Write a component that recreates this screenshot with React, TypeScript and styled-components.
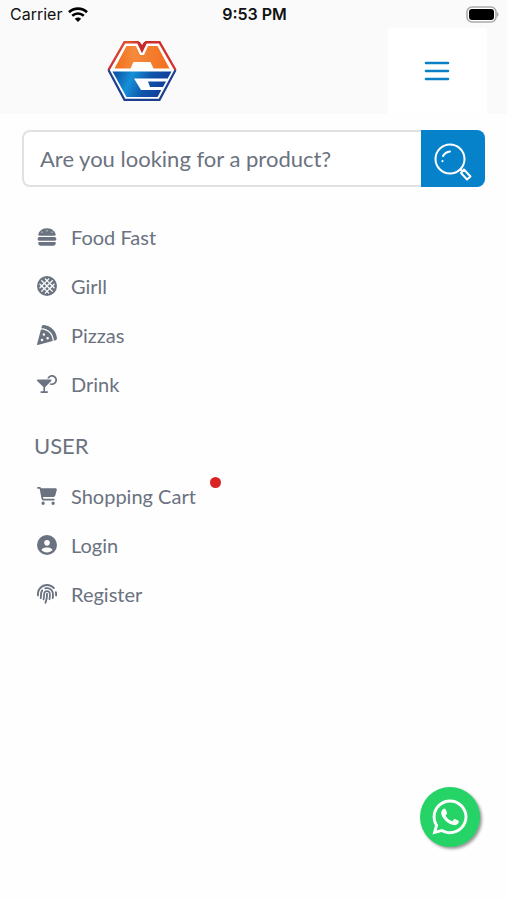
import React from 'react';
import styled, { createGlobalStyle } from 'styled-components';
import {
  FaBurger,
  FaStroopwafel,
  FaPizzaSlice,
  FaMartiniGlassCitrus,
  FaCartShopping,
  FaCircleUser,
  FaFingerprint,
  FaWhatsapp,
} from 'react-icons/fa6';

const GlobalStyle = createGlobalStyle`
  *, *::before, *::after { box-sizing: border-box; }
  body {
    margin: 0;
    background: #fefefe;
    color: #6b7280;
    font-family: Lato, 'Open Sans', sans-serif;
  }
  button, input { font: inherit; }
`;

const Page = styled.div`
  min-height: 100vh;
`;

const StatusBar = styled.div`
  display: grid;
  grid-template-columns: 1fr auto 1fr;
  align-items: center;
  height: 28px;
  padding: 0 8px 0 10px;
  background: #fafafa;
  color: #111;
  font: 400 16px/28px Inter, sans-serif;
`;

const Carrier = styled.div`
  display: flex;
  align-items: center;
  gap: 6px;
`;

const Clock = styled.time`
  font-weight: 600;
`;

const BatteryIcon = styled.svg`
  justify-self: end;
`;

const Header = styled.header`
  display: flex;
  align-items: stretch;
  justify-content: space-between;
  height: 86px;
  padding: 0 20px 0 107px;
  background: #fafafa;
`;

const LogoLink = styled.a`
  display: flex;
  align-items: center;
`;

const MenuButton = styled.button`
  display: flex;
  align-items: center;
  justify-content: center;
  width: 99px;
  padding: 0 2px 0 0;
  border: 0;
  background: #fff;
  color: #0c80c4;
  cursor: pointer;
`;

const SearchForm = styled.form`
  display: flex;
  height: 57px;
  margin: 16px 22px 0;
`;

const SearchInput = styled.input`
  flex: 1;
  min-width: 0;
  padding: 0 16px;
  border: 2px solid #dfe1e3;
  border-right: 0;
  border-radius: 8px 0 0 8px;
  outline: 0;
  background: #fff;
  color: #6b7280;
  font-size: 22px;
  &::placeholder { color: #6b7280; opacity: 1; }
`;

const SearchButton = styled.button`
  display: flex;
  align-items: center;
  justify-content: center;
  width: 64px;
  padding: 6px 0 0;
  border: 0;
  border-radius: 0 8px 8px 0;
  background: #0582ca;
  color: #fff;
  cursor: pointer;
`;

const Nav = styled.nav`
  padding: 25px 34px 0;
`;

const Heading = styled.h2`
  margin: 22px 0 9px;
  color: #6b7280;
  font-size: 22px;
  font-weight: 400;
  line-height: 32px;
`;

const MenuList = styled.ul`
  margin: 0;
  padding: 0;
  list-style: none;
`;

const MenuItem = styled.li`
  display: flex;
  height: 49px;
`;

const MenuLink = styled.a`
  position: relative;
  display: flex;
  align-items: center;
  gap: 14px;
  padding-left: 3px;
  color: #6b7280;
  font-size: 20px;
  text-decoration: none;
  svg { width: 20px; height: 20px; }
`;

const Dot = styled.span`
  position: absolute;
  top: 6px;
  right: -25px;
  width: 11px;
  height: 11px;
  border-radius: 50%;
  background: #dc2323;
`;

const ChatLink = styled.a`
  position: fixed;
  right: 27px;
  bottom: 53px;
  display: flex;
  align-items: center;
  justify-content: center;
  width: 60px;
  height: 60px;
  border-radius: 50%;
  background: #25d366;
  color: #fff;
  box-shadow: 2px 2px 3px #999;
`;

const Logo = () => (
  <svg width="70" height="60" viewBox="0 0 70 60" aria-hidden="true">
    <defs>
      <linearGradient id="rim" x1="0" y1="0" x2="1" y2="0">
        <stop offset="0" stopColor="#c92f33" />
        <stop offset="0.3" stopColor="#e0502f" />
        <stop offset="0.5" stopColor="#c62a2c" />
        <stop offset="1" stopColor="#d8322c" />
      </linearGradient>
      <linearGradient id="sun" x1="0" y1="0" x2="1" y2="0">
        <stop offset="0" stopColor="#ee6f1c" />
        <stop offset="0.35" stopColor="#f58a3c" />
        <stop offset="1" stopColor="#f26f1e" />
      </linearGradient>
      <linearGradient id="sea" x1="0" y1="0" x2="1" y2="0.2">
        <stop offset="0" stopColor="#0b4a9c" />
        <stop offset="0.35" stopColor="#168fd8" />
        <stop offset="0.65" stopColor="#0f55aa" />
        <stop offset="1" stopColor="#123c98" />
      </linearGradient>
    </defs>
    <path d="M17 0H53L70 29 53 60H17L0 29Z" fill="#fff" />
    <path d="M1.500 29 17.500 1.200H31L35 9.500 39 1.200H52.500L68.500 29" fill="none" stroke="url(#rim)" strokeWidth="2.4" />
    <path d="M31 1 35 10 39 1 37 1 35 4 33 1Z" fill="#c62a2c" />
    <path d="M1.500 29 17.500 58.800H52.500L68.500 29" fill="none" stroke="#1c3f8e" strokeWidth="2.2" />
    <path d="M19.500 5H29L33 14H37L41 5H50.500L62.500 27.500H46.500L43.500 21H26.500L23.500 27.500H7.500Z" fill="url(#sun)" />
    <path d="M5.500 30.500H64.500L50.500 56H19.500Z" fill="url(#sea)" />
    <path d="M27 37.500H61L59.500 40.500H41L43 46H56.500L55 49H34Z" fill="#fff" />
  </svg>
);

type Entry = { label: string; Icon: React.ComponentType; marked?: boolean };

const links: Entry[] = [
  { label: 'Food Fast', Icon: FaBurger },
  { label: 'Girll', Icon: FaStroopwafel },
  { label: 'Pizzas', Icon: FaPizzaSlice },
  { label: 'Drink', Icon: FaMartiniGlassCitrus },
];

const userLinks: Entry[] = [
  { label: 'Shopping Cart', Icon: FaCartShopping, marked: true },
  { label: 'Login', Icon: FaCircleUser },
  { label: 'Register', Icon: FaFingerprint },
];

const Menu = ({ entries }: { entries: Entry[] }) => (
  <MenuList>
    {entries.map(({ label, Icon, marked }) => (
      <MenuItem key={label}>
        <MenuLink href="#">
          <Icon />
          {label}
          {marked && <Dot />}
        </MenuLink>
      </MenuItem>
    ))}
  </MenuList>
);

export default function App() {
  return (
    <Page>
      <GlobalStyle />
      <StatusBar>
        <Carrier>
          Carrier
          <svg width="20" height="15" viewBox="0 0 20 15" fill="none" stroke="#000" strokeWidth="2.6" aria-hidden="true">
            <path d="M1 5.2C6 .4 14 .4 19 5.2M4.2 8.8C7.6 5.8 12.4 5.8 15.8 8.8" />
            <path d="M10 15 6.8 11.8C8.8 10.2 11.2 10.2 13.2 11.8Z" fill="#000" stroke="none" />
          </svg>
        </Carrier>
        <Clock>9:53 PM</Clock>
        <BatteryIcon width="33" height="17" viewBox="0 0 33 17" aria-hidden="true">
          <rect x="1" y="1" width="29" height="15" rx="5" fill="#fff" stroke="#aaa" strokeWidth="1.6" />
          <rect x="3" y="3" width="25" height="11" rx="3" fill="#000" />
          <path d="M31 6v5c2-1 2-4 0-5Z" fill="#aaa" />
        </BatteryIcon>
      </StatusBar>
      <Header>
        <LogoLink href="#" aria-label="Home">
          <Logo />
        </LogoLink>
        <MenuButton type="button" aria-label="Menu">
          <svg width="26" height="20" viewBox="0 0 26 20" stroke="currentColor" strokeWidth="2.6" strokeLinecap="round" aria-hidden="true">
            <path d="M2 2H24M2 10H24M2 18H24" />
          </svg>
        </MenuButton>
      </Header>
      <main>
        <SearchForm role="search" onSubmit={(e) => e.preventDefault()}>
          <SearchInput type="text" aria-label="Search products" placeholder="Are you looking for a product?" />
          <SearchButton type="submit" aria-label="Search">
            <svg width="38" height="38" viewBox="0 0 38 38" fill="none" stroke="currentColor" strokeWidth="2" strokeLinecap="round" strokeLinejoin="round" aria-hidden="true">
              <circle cx="16" cy="16" r="14.5" />
              <path d="M9 13C10.5 10.500 12.500 9 16 8.500M8.500 18V18.200M26.500 26.500 28 28" />
              <path d="M30 26.500 36.500 33.500 33 36.500 27 30Z" />
            </svg>
          </SearchButton>
        </SearchForm>
        <Nav aria-label="Main">
          <Menu entries={links} />
          <Heading>USER</Heading>
          <Menu entries={userLinks} />
        </Nav>
      </main>
      <ChatLink href="#" aria-label="WhatsApp">
        <FaWhatsapp size={40} />
      </ChatLink>
    </Page>
  );
}
